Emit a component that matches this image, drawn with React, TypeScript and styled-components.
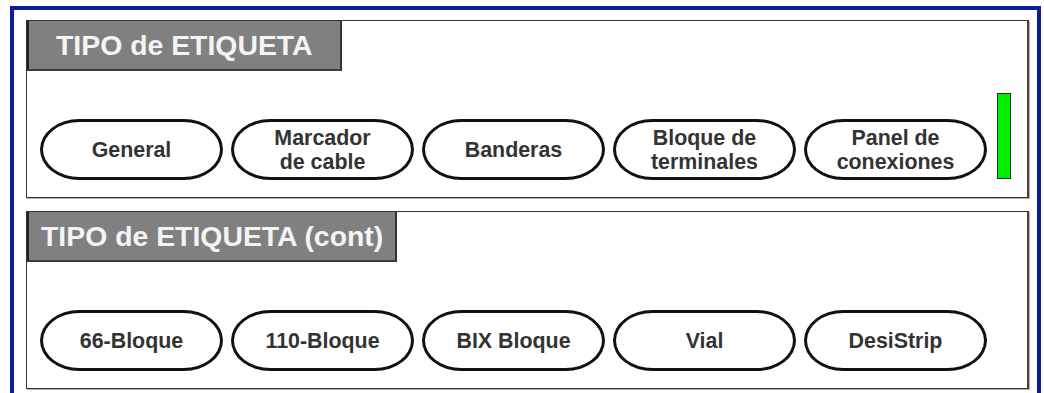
import React from "react";
import styled, { createGlobalStyle } from "styled-components";

const Global = createGlobalStyle`
  html, body { margin: 0; padding: 0; background: #ffffff; }
  body { font-family: "Liberation Sans", Arial, sans-serif; overflow: hidden; }
`;

const Frame = styled.div`
  box-sizing: border-box;
  margin: 6px 0 0 10px;
  width: 1031px;
  height: 387px;
  border: 4px solid #0a1f96;
  border-bottom: none;
  padding: 10px 7px 0 12px;
  display: flex;
  flex-direction: column;
  gap: 13px;
  background: #ffffff;
`;

const Panel = styled.section`
  box-sizing: border-box;
  width: 1003px;
  height: 178px;
  flex-shrink: 0;
  border: 1px solid #333;
  border-right: 2px solid #444;
  box-shadow: 1px 1px 0 #b0b0b0;
  display: flex;
  flex-direction: column;
  justify-content: space-between;
`;

const Header = styled.div<{ $pad: number }>`
  box-sizing: border-box;
  align-self: flex-start;
  height: 50px;
  padding: 0 ${(p) => p.$pad}px;
  background: #808080;
  border-left: 2px solid #222;
  border-right: 2px solid #333;
  border-bottom: 2px solid #3a3a3a;
  display: flex;
  align-items: center;
  color: #f4f4f4;
  font-size: 28.4px;
  font-weight: bold;
  white-space: nowrap;
`;

const Row = styled.div`
  display: flex;
  align-items: flex-end;
  gap: 8px;
  padding: 0 0 17px 13px;
`;

const Pill = styled.div`
  box-sizing: border-box;
  width: 183px;
  height: 61px;
  border: 3px solid #111;
  border-radius: 40px / 31px;
  background: #fff;
  display: flex;
  align-items: center;
  justify-content: center;
  text-align: center;
  color: #333;
  font-size: 21.4px;
  font-weight: bold;
  line-height: 24px;
`;

const Level = styled.div`
  box-sizing: border-box;
  width: 14px;
  height: 86px;
  margin: 0 0 1px 2px;
  background: #00f000;
  border: 1px solid #2a2a2a;
`;

const rows: { title: string; pad: number; items: string[][]; level?: boolean }[] = [
  {
    title: "TIPO de ETIQUETA",
    pad: 27,
    items: [["General"], ["Marcador", "de cable"], ["Banderas"], ["Bloque de", "terminales"], ["Panel de", "conexiones"]],
    level: true,
  },
  {
    title: "TIPO de ETIQUETA (cont)",
    pad: 12,
    items: [["66-Bloque"], ["110-Bloque"], ["BIX Bloque"], ["Vial"], ["DesiStrip"]],
  },
];

export default function App() {
  return (
    <>
      <Global />
      <Frame>
        {rows.map((r) => (
          <Panel key={r.title}>
            <Header $pad={r.pad}>{r.title}</Header>
            <Row>
              {r.items.map((lines) => (
                <Pill key={lines.join(" ")}>
                  <span>
                    {lines.map((l, i) => (
                      <React.Fragment key={l}>
                        {i > 0 && <br />}
                        {l}
                      </React.Fragment>
                    ))}
                  </span>
                </Pill>
              ))}
              {r.level && <Level />}
            </Row>
          </Panel>
        ))}
      </Frame>
    </>
  );
}
